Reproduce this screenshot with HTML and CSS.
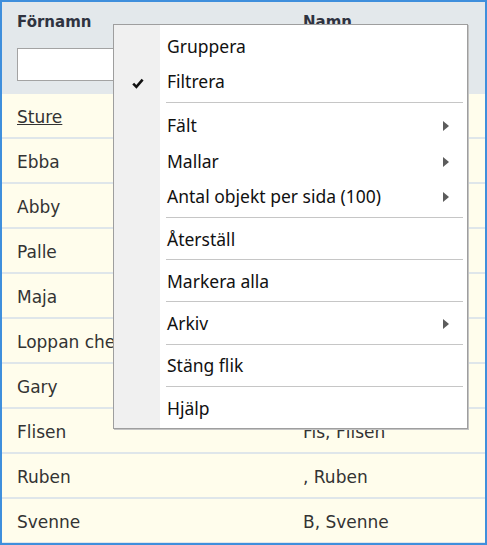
FILE: index.html
```html
<!DOCTYPE html>
<html lang="sv">
<head>
<meta charset="utf-8">
<title>Lista</title>
<link rel="stylesheet" href="styles.css">
</head>
<body>
<div class="grid">
  <div class="head">
    <div class="hcell">
      <div class="htitle">Förnamn</div>
      <input class="filter filter-a" type="text">
    </div>
    <div class="hcell">
      <div class="htitle">Namn</div>
      <input class="filter filter-b" type="text">
    </div>
  </div>
  <div class="row"><div class="cell"><a class="link" href="#">Sture</a></div><div class="cell"></div></div>
  <div class="row"><div class="cell">Ebba</div><div class="cell"></div></div>
  <div class="row"><div class="cell">Abby</div><div class="cell"></div></div>
  <div class="row"><div class="cell">Palle</div><div class="cell"></div></div>
  <div class="row"><div class="cell">Maja</div><div class="cell"></div></div>
  <div class="row"><div class="cell">Loppan chef</div><div class="cell"></div></div>
  <div class="row"><div class="cell">Gary</div><div class="cell"></div></div>
  <div class="row"><div class="cell">Flisen</div><div class="cell">Fis, Flisen</div></div>
  <div class="row"><div class="cell">Ruben</div><div class="cell">, Ruben</div></div>
  <div class="row"><div class="cell">Svenne</div><div class="cell">B, Svenne</div></div>

  <div class="menu">
    <div class="item"><span class="gut"></span><span class="label">Gruppera</span></div>
    <div class="item"><span class="gut"><svg class="check" width="12" height="11" viewBox="0 0 12 11"><path d="M1.2 5.6 L4.4 8.8 L10.6 1.6" fill="none" stroke="#111" stroke-width="2.6"/></svg></span><span class="label">Filtrera</span></div>
    <div class="sep sep-wide"></div>
    <div class="item"><span class="gut"></span><span class="label">Fält</span><svg class="arrow" width="6" height="10" viewBox="0 0 6 10"><polygon points="0,0 6,5 0,10" fill="#5c5c5c"/></svg></div>
    <div class="item"><span class="gut"></span><span class="label">Mallar</span><svg class="arrow" width="6" height="10" viewBox="0 0 6 10"><polygon points="0,0 6,5 0,10" fill="#5c5c5c"/></svg></div>
    <div class="item"><span class="gut"></span><span class="label">Antal objekt per sida (100)</span><svg class="arrow" width="6" height="10" viewBox="0 0 6 10"><polygon points="0,0 6,5 0,10" fill="#5c5c5c"/></svg></div>
    <div class="sep"></div>
    <div class="item"><span class="gut"></span><span class="label">Återställ</span></div>
    <div class="sep"></div>
    <div class="item"><span class="gut"></span><span class="label">Markera alla</span></div>
    <div class="sep"></div>
    <div class="item"><span class="gut"></span><span class="label">Arkiv</span><svg class="arrow" width="6" height="10" viewBox="0 0 6 10"><polygon points="0,0 6,5 0,10" fill="#5c5c5c"/></svg></div>
    <div class="sep"></div>
    <div class="item"><span class="gut"></span><span class="label">Stäng flik</span></div>
    <div class="sep"></div>
    <div class="item"><span class="gut"></span><span class="label">Hjälp</span></div>
  </div>
</div>
</body>
</html>
```

FILE: styles.css
```css
html, body {
  margin: 0;
  padding: 0;
  background: #ffffff;
}

.grid {
  position: relative;
  box-sizing: border-box;
  width: 487px;
  height: 545px;
  border: 2px solid #3f8fdc;
  overflow: hidden;
  background: #fffdec;
  font-family: "DejaVu Sans", Verdana, sans-serif;
  color: #333333;
}

.head {
  display: grid;
  grid-template-columns: 286px 1fr;
  height: 92px;
  background: #e3e8eb;
}

.hcell {
  padding: 11px 0 0 15px;
}

.htitle {
  font-weight: bold;
  font-size: 15px;
  line-height: 18px;
  color: #2f3340;
}

.filter {
  display: block;
  box-sizing: border-box;
  margin: 17px 0 0 0;
  height: 33px;
  border: 1px solid #a3a3a3;
  background: #ffffff;
  padding: 0 4px;
}

.filter-a { width: 200px; }
.filter-b { width: 150px; }

.row {
  display: grid;
  grid-template-columns: 286px 1fr;
  box-sizing: border-box;
  height: 45px;
  border-bottom: 2px solid #dfe6ea;
}

.cell {
  padding: 4px 0 0 15px;
  font-size: 17px;
  line-height: 39px;
  white-space: nowrap;
  overflow: hidden;
}

.link {
  color: #333333;
  text-decoration: underline;
}

.menu {
  position: absolute;
  left: 111px;
  top: 22px;
  box-sizing: border-box;
  width: 355px;
  padding: 3.5px 0 1.5px 0;
  border: 1px solid #9e9e9e;
  box-shadow: 1px 1px 0 #c4c4c4;
  background: linear-gradient(to right, #f0f0f0 0, #f0f0f0 46px, #ffffff 46px);
  font-family: "Noto Sans", "Open Sans", sans-serif;
  font-size: 17.5px;
  color: #111111;
}

.item {
  display: flex;
  align-items: center;
  height: 35.5px;
  line-height: 35.5px;
}

.gut {
  display: flex;
  align-items: center;
  justify-content: center;
  width: 46px;
  height: 100%;
  padding-left: 2px;
  box-sizing: border-box;
}

.check {
  margin-top: 4px;
}

.label {
  flex: 1;
  padding-left: 7px;
  white-space: nowrap;
}

.arrow {
  margin-right: 18px;
}

.sep {
  height: 1px;
  margin: 2px 4px 3.75px 52px;
  background: #c6c6c6;
}

.sep-wide {
  margin-bottom: 5.75px;
}
```
